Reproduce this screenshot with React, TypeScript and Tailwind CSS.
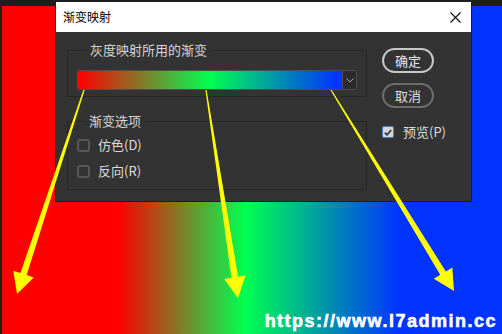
const arrows: [number, number, number, number][] = [
  [84, 90, 17, 294],
  [206, 90, 238, 298],
  [331, 90, 454, 291],
];

// tapered arrow polygon from start point to tip
function arrowPoints(x1: number, y1: number, x2: number, y2: number) {
  const headLen = 21;
  const headHalf = 10.8;
  const tail = 0.6;
  const shaft = 3.3;
  const dx = x2 - x1;
  const dy = y2 - y1;
  const len = Math.hypot(dx, dy);
  const ux = dx / len;
  const uy = dy / len;
  const px = -uy;
  const py = ux;
  const bx = x2 - ux * headLen;
  const by = y2 - uy * headLen;
  const pts = [
    [x1 + px * tail, y1 + py * tail],
    [bx + px * shaft, by + py * shaft],
    [bx + px * headHalf, by + py * headHalf],
    [x2, y2],
    [bx - px * headHalf, by - py * headHalf],
    [bx - px * shaft, by - py * shaft],
    [x1 - px * tail, y1 - py * tail],
  ];
  return pts.map((p) => p.map((n) => n.toFixed(1)).join(',')).join(' ');
}

const Checkbox = ({ label }: { label: string }) => (
  <div className="flex items-center h-[16px] gap-[8px]">
    <span className="w-[13px] h-[13px] rounded-[3px] border-2 border-[#575757]" />
    <span className="text-[13px] leading-[16px] text-[#dcdcdc]">{label}</span>
  </div>
);

const Dialog = () => {
  return (
    <div className="absolute left-[55px] top-[1px] w-[417px] h-[201px] border border-[#1e1e1e] flex flex-col">
      <div className="h-[30px] bg-white flex items-center justify-between pl-[7px] pr-[10px]">
        <span className="text-[12px] text-black">渐变映射</span>
        <svg width="11" height="11" viewBox="0 0 11 11">
          <path d="M0.5 0.5 L10.5 10.5 M10.5 0.5 L0.5 10.5" stroke="#111" strokeWidth="1.2" />
        </svg>
      </div>
      <div className="flex-1 bg-[#333333] flex">
        <div className="ml-[11px] mt-[10px] w-[300px] flex flex-col gap-[16px]">
          <fieldset className="border border-[#262626] px-[9px] pb-[6px]">
            <legend className="ml-[9px] px-[4px] text-[13px] leading-[16px] text-[#d6d6d6]">
              灰度映射所用的渐变
            </legend>
            <div className="mt-[12px] h-[20px] flex border border-[#4e4e4e] rounded-[2px] overflow-hidden">
              <div className="flex-1 bg-[linear-gradient(to_right,#ff0000_0%,#00ff50_50%,#0033ff_98%)]" />
              <div className="w-[14px] bg-[#2b2b2b] border-l border-[#4e4e4e] flex items-center justify-center">
                <svg width="8" height="5" viewBox="0 0 8 5">
                  <path d="M0.5 0.5 L4 4 L7.5 0.5" stroke="#a8a8a8" strokeWidth="1" fill="none" />
                </svg>
              </div>
            </div>
          </fieldset>
          <fieldset className="border border-[#262626] px-[9px] pb-[10px]">
            <legend className="ml-[8px] px-[4px] text-[13px] leading-[16px] text-[#d6d6d6]">
              渐变选项
            </legend>
            <div className="mt-[8px] flex flex-col gap-[10px]">
              <Checkbox label="仿色(D)" />
              <Checkbox label="反向(R)" />
            </div>
          </fieldset>
        </div>
        <div className="ml-[15px] mt-[16px] flex flex-col">
          <button className="w-[52px] h-[25px] rounded-full border-2 border-[#c8c8c8] text-[13px] text-[#e6e6e6] flex items-center justify-center">
            确定
          </button>
          <button className="mt-[10px] w-[52px] h-[25px] rounded-full border-2 border-[#6c6c6c] text-[13px] text-[#e0e0e0] flex items-center justify-center">
            取消
          </button>
          <div className="mt-[16px] flex items-center h-[16px] gap-[9px]">
            <span className="w-[12px] h-[12px] rounded-[2px] border-[1.5px] border-[#4a7ccc] bg-[#d6d6d6] flex items-center justify-center">
              <svg width="8" height="7" viewBox="0 0 8 7">
                <path d="M0.8 3.6 L3 5.8 L7.2 1" stroke="#3a3a3a" strokeWidth="1.8" fill="none" />
              </svg>
            </span>
            <span className="text-[13px] leading-[16px] text-[#dcdcdc]">预览(P)</span>
          </div>
        </div>
      </div>
    </div>
  );
};

export default function App() {
  return (
    <div className="relative w-[502px] h-[334px] overflow-hidden bg-[#1e1e1e] pt-[6px] pl-[2px] font-['Noto_Sans_CJK_SC','Noto_Sans',sans-serif]">
      <div className="h-full w-full bg-[linear-gradient(to_right,#ff0000_116px,#00ff50_243px,#0033ff_398px)]" />
      <Dialog />
      <svg className="absolute inset-0" width="502" height="334" viewBox="0 0 502 334">
        {arrows.map(([x1, y1, x2, y2], i) => (
          <polygon key={i} points={arrowPoints(x1, y1, x2, y2)} fill="#ffff00" />
        ))}
      </svg>
      <span className="absolute right-[5px] bottom-[4px] text-white font-bold text-[18px] leading-none tracking-[1.5px] [-webkit-text-stroke:0.6px_#fff] font-['Liberation_Sans',Arial,sans-serif]">
        https://www.l7admin.cc
      </span>
    </div>
  );
}
